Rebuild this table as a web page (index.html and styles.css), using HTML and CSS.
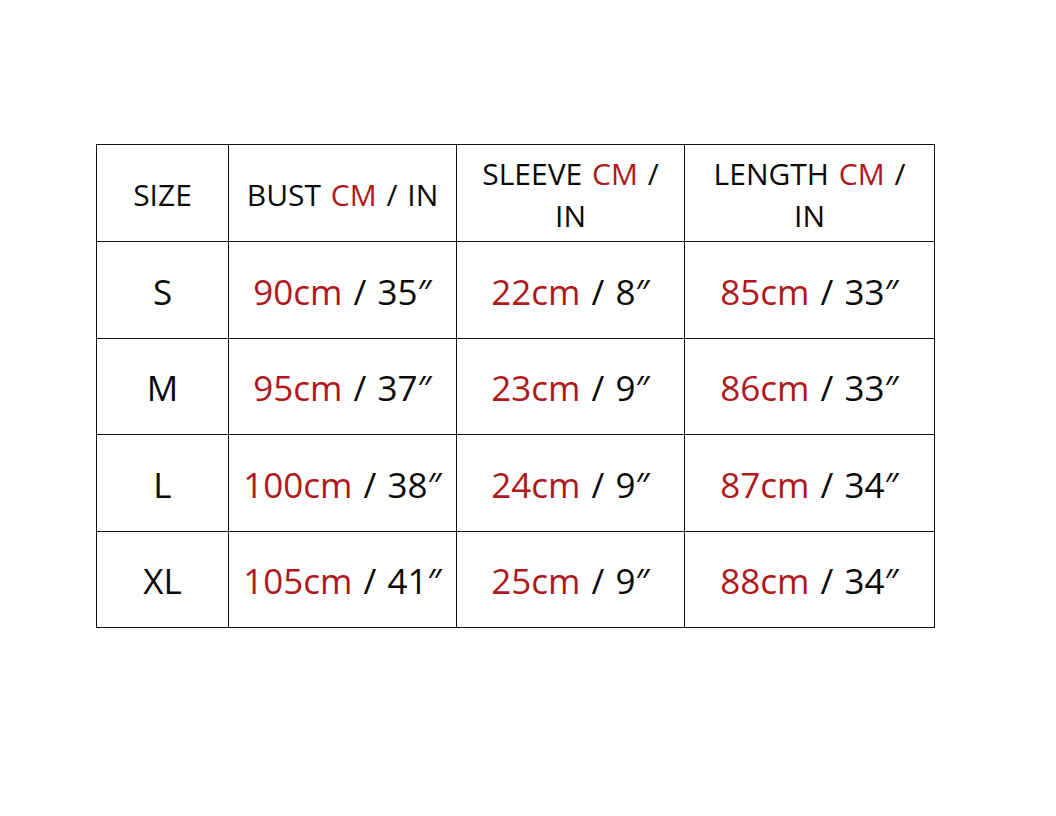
FILE: index.html
```html
<!DOCTYPE html>
<html>
<head>
<meta charset="utf-8">
<link rel="stylesheet" href="styles.css">
</head>
<body>
<table class="sizes">
  <colgroup>
    <col class="c1"><col class="c2"><col class="c3"><col class="c4">
  </colgroup>
  <tr class="head">
    <td>SIZE</td>
    <td>BUST <span class="red">CM</span> / IN</td>
    <td>SLEEVE <span class="red">CM</span> /<br>IN</td>
    <td>LENGTH <span class="red">CM</span> /<br>IN</td>
  </tr>
  <tr>
    <td>S</td>
    <td><span class="red">90cm</span> / 35″</td>
    <td><span class="red">22cm</span> / 8″</td>
    <td><span class="red">85cm</span> / 33″</td>
  </tr>
  <tr>
    <td>M</td>
    <td><span class="red">95cm</span> / 37″</td>
    <td><span class="red">23cm</span> / 9″</td>
    <td><span class="red">86cm</span> / 33″</td>
  </tr>
  <tr>
    <td>L</td>
    <td><span class="red">100cm</span> / 38″</td>
    <td><span class="red">24cm</span> / 9″</td>
    <td><span class="red">87cm</span> / 34″</td>
  </tr>
  <tr>
    <td>XL</td>
    <td><span class="red">105cm</span> / 41″</td>
    <td><span class="red">25cm</span> / 9″</td>
    <td><span class="red">88cm</span> / 34″</td>
  </tr>
</table>
</body>
</html>
```

FILE: styles.css
```css
html, body {
  margin: 0;
  padding: 0;
  background: #ffffff;
}
body {
  padding: 144px 0 0 96px;
  font-family: "Open Sans", "Noto Sans", sans-serif;
  color: #0a0a0a;
}
.sizes {
  border-collapse: collapse;
  table-layout: fixed;
  width: 838px;
}
.c1 { width: 132px; }
.c2 { width: 228px; }
.c3 { width: 228px; }
.c4 { width: 250px; }
.sizes td {
  border: 1px solid #111111;
  height: 91.5px;
  padding: 4px 0 0 0;
  text-align: center;
  vertical-align: middle;
  font-size: 35px;
  line-height: 42px;
  word-spacing: 2px;
}
.sizes .head td {
  height: 92px;
  font-size: 30px;
  line-height: 42px;
}
.red {
  color: #b0181b;
}
```
